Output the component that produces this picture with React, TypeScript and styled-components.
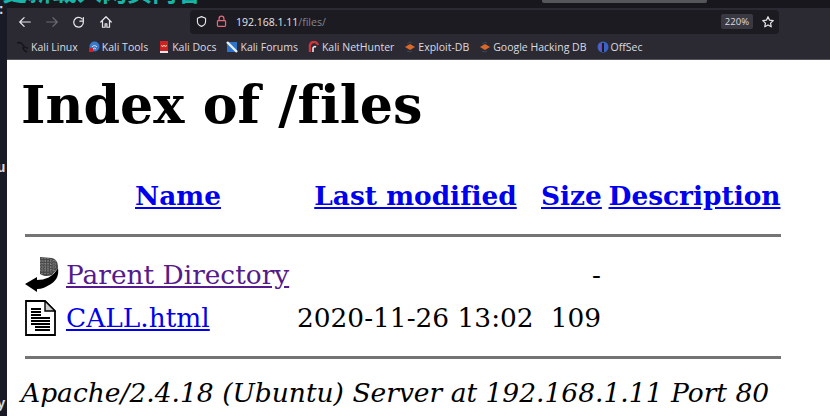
import styled, { createGlobalStyle } from 'styled-components';

const GlobalStyle = createGlobalStyle`
  html, body {
    margin: 0;
    padding: 0;
    width: 830px;
    height: 416px;
    overflow: hidden;
    background: #16181f;
  }
`;

const Page = styled.div`
  position: relative;
  width: 830px;
  height: 416px;
  display: grid;
  grid-template-columns: 7px 1fr;
  overflow: hidden;
`;

const Desktop = styled.div`
  background: #181b26;
`;

// bits of the terminal window sticking out behind the browser
const TerminalGlyph = styled.span<{ $top: number }>`
  position: absolute;
  left: -3px;
  top: ${(p) => p.$top}px;
  font: 700 14px "Liberation Mono", monospace;
  color: #d8dce4;
`;

const TitleClip = styled.div`
  position: absolute;
  left: 0;
  top: 0;
  width: 210px;
  height: 7px;
  overflow: hidden;
`;

const TitleText = styled.div`
  margin: -28px 0 0 2px;
  font: 700 25px "Noto Sans CJK SC", sans-serif;
  color: #17b5a8;
  white-space: nowrap;
`;

const Right = styled.div`
  display: flex;
  flex-direction: column;
  min-width: 0;
`;

const TabStrip = styled.div`
  height: 8px;
  background: #18171d;
  display: flex;
  justify-content: flex-end;
  padding-right: 123px;
`;

const ActiveTab = styled.div`
  width: 165px;
  height: 3px;
  background: #55565a;
  border-radius: 0 0 2px 2px;
`;

const Toolbar = styled.div`
  height: 27px;
  background: #2b2a33;
  display: flex;
  align-items: center;
  padding: 0 7px 0 4px;
  color: #e6e6ea;
`;

const NavButton = styled.div<{ $dim?: boolean }>`
  width: 27px;
  display: flex;
  justify-content: center;
  color: ${(p) => (p.$dim ? '#6b6b73' : '#e6e6ea')};
`;

const UrlBar = styled.div`
  margin-left: 71px;
  width: 589px;
  height: 24px;
  box-sizing: border-box;
  background: #1c1b22;
  border-radius: 4px;
  display: flex;
  align-items: center;
  padding: 0 4px 0 2px;
  font: 10.5px "Open Sans", sans-serif;
`;

const UrlIcon = styled.div<{ $width: number }>`
  width: ${(p) => p.$width}px;
  display: flex;
  justify-content: center;
`;

const UrlText = styled.div`
  margin-left: 4px;
  flex: 1;
  color: #e4e4e8;
`;

const UrlPath = styled.span`
  color: #85858c;
`;

const Zoom = styled.div`
  background: #3a3942;
  color: #dcdce0;
  font-size: 9.5px;
  border-radius: 2px;
  padding: 1px 4px;
  margin-right: 8px;
`;

const Bookmarks = styled.div`
  height: 25px;
  box-sizing: border-box;
  background: #2b2a33;
  border-bottom: 1px solid #55555c;
  display: flex;
  align-items: center;
  padding-left: 10px;
  gap: 10px;
  font: 10.5px "Open Sans", sans-serif;
  color: #dcdce0;
`;

const Bookmark = styled.div`
  display: flex;
  align-items: center;
  gap: 2px;
  white-space: nowrap;
`;

const Content = styled.div`
  flex: 1;
  background: #fff;
  padding-left: 14px;
  font-family: "DejaVu Serif", serif;
  font-variant-ligatures: none;
  color: #000;
`;

const Heading = styled.h1`
  margin: 14px 0 0;
  height: 62px;
  font-size: 52.3px;
  line-height: 62px;
  font-weight: 700;
  white-space: nowrap;
`;

const Listing = styled.table`
  margin: 44px 0 0 4px;
  width: 756px;
  table-layout: fixed;
  border-collapse: collapse;
  font-size: 26.4px;
  white-space: nowrap;
`;

const Cell = styled.td<{ $right?: boolean }>`
  padding: 0 7px 0 0;
  height: 43px;
  text-align: ${(p) => (p.$right ? 'right' : 'left')};
`;

const HeadCell = styled.th`
  padding: 0 7px 0 0;
  height: 31px;
  font-weight: 700;
  text-align: center;

  &:last-child {
    padding-right: 0;
  }
`;

const IconCell = styled.td`
  padding: 0;
  line-height: 0;
  vertical-align: middle;
`;

const TableLink = styled.a<{ $visited?: boolean }>`
  color: ${(p) => (p.$visited ? '#551a8b' : '#0000ee')};
  text-decoration: underline;
`;

const RuleCell = styled.td`
  padding: 0;
  height: 3px;
  background: #747474;
`;

const Spacer = styled.td<{ $height: number }>`
  padding: 0;
  height: ${(p) => p.$height}px;
`;

const Address = styled.address`
  margin-top: 18px;
  font-size: 26.5px;
  font-style: italic;
  white-space: nowrap;
`;

const Stroke = ({ d, size = 14 }: { d: string; size?: number }) => (
  <svg width={size} height={size} viewBox="0 0 16 16" fill="none" stroke="currentColor" strokeWidth="1.4" strokeLinecap="round" strokeLinejoin="round">
    <path d={d} />
  </svg>
);

const ParentIcon = () => (
  <svg width="36" height="40" viewBox="0 0 36 40">
    <path d="M15 2 L27 3 C31 4 33 7 33 13 L27 20 C22 22 18 21 15 19 Z" fill="#4a4a4a" />
    <path d="M17 3v16M20 3v17M23 3v17M26 4v15M29 5v11M15 6h17M15 9h18M15 12h17M15 15h14" stroke="#999" strokeWidth="1" strokeDasharray="1 1.5" />
    <path d="M0 29 L12 22 V25 C20 25 28 22 33 13 C34 20 32 25 26 29 C21 32 17 34 12 34 V37 Z" fill="#000" />
  </svg>
);

const FileIcon = () => (
  <svg width="31" height="36" viewBox="0 0 31 36">
    <path d="M1 1H20L30 11V35H1Z" fill="#fff" stroke="#000" strokeWidth="1.8" />
    <path d="M20 1V11H30Z" fill="#ccc" stroke="#000" strokeWidth="1.4" />
    <path d="M6 9h10M6 12h10M6 15h10M6 18h19M6 21h19M6 24h19M10 27h15M10 30h15" stroke="#000" strokeWidth="2" />
  </svg>
);

const KaliFavicon = () => (
  <svg width="12" height="12" viewBox="0 0 12 12" fill="none" stroke="#15161a" strokeWidth="1.6">
    <path d="M0 2c3-1 5 0 6 2s2 3 5 3M6 6c0 2 1 4 4 5" />
  </svg>
);

const ToolsFavicon = () => (
  <svg width="12" height="12" viewBox="0 0 12 12">
    <circle cx="6.5" cy="5.5" r="5" fill="#3b78c9" />
    <path d="M4 6a3 3 0 0 1 5 0M5 8a2 2 0 0 1 3 0" stroke="#d6e4f5" fill="none" />
    <rect x="1" y="7" width="4" height="4" fill="#c9202a" />
  </svg>
);

const DocsFavicon = () => (
  <svg width="12" height="12" viewBox="0 0 12 12">
    <rect x="2" y="0" width="8" height="10" fill="#d11f26" />
    <path d="M3.5 4l1 2 1.5-2 1.5 2 1-2" stroke="#f3d9a0" fill="none" />
    <rect x="2" y="10" width="8" height="2" fill="#e8e8e8" />
  </svg>
);

const ForumsFavicon = () => (
  <svg width="12" height="12" viewBox="0 0 12 12">
    <rect x="1" y="1" width="10" height="10" fill="#2f74c8" />
    <path d="M1 1l10 10" stroke="#e8eef5" strokeWidth="2.4" />
  </svg>
);

const HunterFavicon = () => (
  <svg width="12" height="12" viewBox="0 0 12 12" fill="none">
    <path d="M2 11V6a4 4 0 0 1 8-2" stroke="#d1343c" strokeWidth="2.4" />
    <path d="M5 11V7a2 2 0 0 1 3-1" stroke="#e8e8e8" strokeWidth="1.6" />
  </svg>
);

const ExploitFavicon = () => (
  <svg width="12" height="12" viewBox="0 0 12 12">
    <path d="M1 6l5-3 5 3-5 3z" fill="#d9682a" />
    <path d="M3 3l3-2 2 1M3 10l3 1 2-1" stroke="#3a4654" fill="none" />
  </svg>
);

const OffSecFavicon = () => (
  <svg width="12" height="12" viewBox="0 0 12 12">
    <circle cx="6" cy="6" r="5.5" fill="#3a62c4" />
    <rect x="5" y="2" width="2" height="9" fill="#1c1b22" />
    <path d="M3 3v6" stroke="#8a4bc4" strokeWidth="1.5" />
  </svg>
);

const bookmarks = [
  { name: 'Kali Linux', icon: <KaliFavicon /> },
  { name: 'Kali Tools', icon: <ToolsFavicon /> },
  { name: 'Kali Docs', icon: <DocsFavicon /> },
  { name: 'Kali Forums', icon: <ForumsFavicon /> },
  { name: 'Kali NetHunter', icon: <HunterFavicon /> },
  { name: 'Exploit-DB', icon: <ExploitFavicon /> },
  { name: 'Google Hacking DB', icon: <ExploitFavicon /> },
  { name: 'OffSec', icon: <OffSecFavicon /> },
];

const App = () => {
  return (
    <Page>
      <GlobalStyle />
      <Desktop />
      <TerminalGlyph $top={2}>:</TerminalGlyph>
      <TerminalGlyph $top={160}>u</TerminalGlyph>
      <TerminalGlyph $top={396}>y</TerminalGlyph>
      <Right>
        <TabStrip>
          <ActiveTab />
        </TabStrip>
        <Toolbar>
          <NavButton><Stroke d="M14 8H2M7 3L2 8l5 5" /></NavButton>
          <NavButton $dim><Stroke d="M2 8h12M9 3l5 5-5 5" /></NavButton>
          <NavButton><Stroke d="M13 3v4H9M13 8a5.5 5.5 0 1 1-1.5-3.5" /></NavButton>
          <NavButton><Stroke d="M2 8l6-6 6 6M4 7v7h3v-4h2v4h3V7" /></NavButton>
          <UrlBar>
            <UrlIcon $width={18}><Stroke d="M8 2l5 2v4c0 3-2 5-5 6-3-1-5-3-5-6V4z" size={13} /></UrlIcon>
            <UrlIcon $width={22}>
              <svg width="13" height="13" viewBox="0 0 16 16" fill="none" stroke="#e8687a" strokeWidth="1.5">
                <rect x="3" y="7" width="10" height="7" rx="1" />
                <path d="M5 7V4.5a3 3 0 0 1 6 0V7" />
              </svg>
            </UrlIcon>
            <UrlText>192.168.1.11<UrlPath>/files/</UrlPath></UrlText>
            <Zoom>220%</Zoom>
            <Stroke d="M8 2l1.8 3.9 4.2.5-3.1 2.9.8 4.2L8 11.4l-3.7 2.1.8-4.2L2 6.4l4.2-.5z" />
          </UrlBar>
        </Toolbar>
        <Bookmarks>
          {bookmarks.map((b) => (
            <Bookmark key={b.name}>
              {b.icon}
              {b.name}
            </Bookmark>
          ))}
        </Bookmarks>
        <Content>
          <Heading>Index of /files</Heading>
          <Listing>
            <colgroup>
              <col width={41} />
              <col width={231} />
              <col width={244} />
              <col width={67} />
              <col width={173} />
            </colgroup>
            <thead>
              <tr>
                <HeadCell />
                <HeadCell><TableLink>Name</TableLink></HeadCell>
                <HeadCell><TableLink>Last modified</TableLink></HeadCell>
                <HeadCell><TableLink>Size</TableLink></HeadCell>
                <HeadCell><TableLink>Description</TableLink></HeadCell>
              </tr>
            </thead>
            <tbody>
              <tr><Spacer colSpan={5} $height={23} /></tr>
              <tr><RuleCell colSpan={5} /></tr>
              <tr><Spacer colSpan={5} $height={16} /></tr>
              <tr>
                <IconCell><ParentIcon /></IconCell>
                <Cell><TableLink $visited>Parent Directory</TableLink></Cell>
                <Cell />
                <Cell $right>-</Cell>
                <Cell />
              </tr>
              <tr>
                <IconCell><FileIcon /></IconCell>
                <Cell><TableLink>CALL.html</TableLink></Cell>
                <Cell>2020-11-26 13:02</Cell>
                <Cell $right>109</Cell>
                <Cell />
              </tr>
              <tr><Spacer colSpan={5} $height={17} /></tr>
              <tr><RuleCell colSpan={5} /></tr>
            </tbody>
          </Listing>
          <Address>Apache/2.4.18 (Ubuntu) Server at 192.168.1.11 Port 80</Address>
        </Content>
      </Right>
      <TitleClip><TitleText>更新载入网页内容</TitleText></TitleClip>
    </Page>
  );
};

export default App;
